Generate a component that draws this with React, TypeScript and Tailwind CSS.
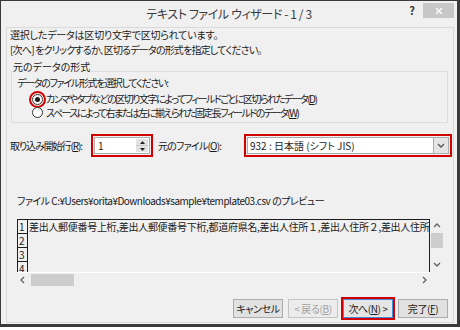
import React from 'react';

function U({ children }: { children: React.ReactNode }) {
  return <span className="underline underline-offset-1">{children}</span>;
}

function Chevron({ dir, color = '#606060' }: { dir: 'up' | 'down' | 'left' | 'right'; color?: string }) {
  const pts = {
    up: '1,5 4,2 7,5',
    down: '1,2 4,5 7,2',
    left: '5,1 2,4 5,7',
    right: '3,1 6,4 3,7',
  }[dir];
  return (
    <svg width="8" height="8" viewBox="0 0 8 8">
      <polyline points={pts} fill="none" stroke={color} strokeWidth="1.3" />
    </svg>
  );
}

function Radio({ checked }: { checked?: boolean }) {
  return (
    <div
      className={
        'w-[11px] h-[11px] rounded-full border border-[#333] bg-white flex items-center justify-center shrink-0 ' +
        (checked ? 'outline-2 outline-[#d40000] outline-offset-1' : '')
      }
    >
      {checked && <div className="w-[5px] h-[5px] rounded-full bg-[#1c1c1c]" />}
    </div>
  );
}

export default function App() {
  return (
    <div className="w-[460px] h-[330px] bg-white font-['Noto_Sans_CJK_JP','Noto_Sans',sans-serif] [font-feature-settings:'palt'] text-[10px] text-[#1a1a1a]">
      <div className="w-[460px] h-[327px] bg-[#f0f0f0] border-l border-t border-r-[3px] border-b-[3px] border-[#3a3a3a] flex flex-col">
        {/* title bar */}
        <div className="h-[26px] grid grid-cols-[1fr_auto_1fr] items-start">
          <div />
          <div className="pt-[5px] text-[12px] leading-[16px] tracking-[-0.4px] text-[#3a3a3a] whitespace-nowrap">
            テキスト ファイル ウィザード - 1 / 3
          </div>
          <div className="flex justify-end items-start pr-[3px] pt-[2px] gap-[8px]">
            <span className="text-[11px] font-bold leading-[14px] text-[#333]">?</span>
            <div className="w-[31px] h-[15px] bg-[#c7c7c7] flex items-center justify-center">
              <svg width="8" height="8" viewBox="0 0 8 8">
                <path d="M1 1 L7 7 M7 1 L1 7" stroke="#fff" strokeWidth="1.4" />
              </svg>
            </div>
          </div>
        </div>

        {/* client area */}
        <div className="ml-[5px] w-[448px] h-[296px] border border-[#dadada] flex flex-col">
          <div className="h-[13px] leading-[13px] pl-[3px] tracking-[-0.2px]">選択したデータは区切り文字で区切られています。</div>
          <div className="h-[17px] leading-[17px] pl-[3px] tracking-[-0.8px]">
            [次へ] をクリックするか、区切るデータの形式を指定してください。
          </div>

          {/* group box */}
          <div className="relative mt-[13px] ml-[4px] mr-[5px] border border-[#dcdcdc] pt-[4px] pb-[4px]">
            <span className="absolute left-[1px] -top-[12px] leading-[14px] bg-[#f0f0f0] pr-[1px]">元のデータの形式</span>
            <div className="h-[14px] leading-[14px] pl-[5px] tracking-[-1.3px]">データのファイル形式を選択してください:</div>
            <div className="mt-[1px] h-[16px] flex items-center pl-[20px] gap-[3px]">
              <Radio checked />
              <span className="leading-[16px] tracking-[-1.5px] whitespace-nowrap">
                カンマやタブなどの区切り文字によってフィールドごとに区切られたデータ(<U>D</U>)
              </span>
            </div>
            <div className="h-[11px] flex items-center pl-[20px] gap-[3px]">
              <Radio />
              <span className="leading-[11px] tracking-[-1.5px] whitespace-nowrap">
                スペースによって右または左に揃えられた固定長フィールドのデータ(<U>W</U>)
              </span>
            </div>
          </div>

          {/* start row / file origin */}
          <div className="mt-[11px] h-[23px] flex items-center pl-[3px]">
            <span className="w-[84px] whitespace-nowrap tracking-[-1.1px]">取り込み開始行(<U>R</U>):</span>
            <div className="w-[56px] h-[17px] border border-[#acacac] bg-white flex outline-2 outline-[#d40000] outline-offset-1">
              <span className="flex-1 pl-[3px] leading-[15px]">1</span>
              <div className="w-[12px] mr-[1px] my-[1px] bg-[#e3e3e3] flex flex-col">
                <div className="flex-1 flex items-center justify-center border-b border-[#c8c8c8]">
                  <svg width="5" height="3" viewBox="0 0 5 3"><polygon points="0,3 2.5,0 5,3" fill="#222" /></svg>
                </div>
                <div className="flex-1 flex items-center justify-center">
                  <svg width="5" height="3" viewBox="0 0 5 3"><polygon points="0,0 2.5,3 5,0" fill="#222" /></svg>
                </div>
              </div>
            </div>
            <span className="ml-[8px] w-[89px] whitespace-nowrap tracking-[-0.8px]">元のファイル(<U>O</U>):</span>
            <div className="w-[202px] h-[17px] border border-[#acacac] bg-white flex outline-2 outline-[#d40000] outline-offset-1">
              <span className="flex-1 pl-[2px] leading-[15px]">932 : 日本語 (シフト JIS)</span>
              <div className="w-[15px] bg-[#e5e5e5] border-l border-[#acacac] flex items-center justify-center">
                <Chevron dir="down" color="#555" />
              </div>
            </div>
          </div>

          <div className="mt-[37px] h-[14px] leading-[14px] pl-[10px] whitespace-nowrap tracking-[-0.5px]">
            ファイル C:¥Users¥orita¥Downloads¥sample¥template03.csv のプレビュー
          </div>

          {/* preview */}
          <div className="mt-[11px] ml-[10px] flex flex-col w-[427px]">
            <div className="flex">
              <div className="w-[413px] h-[53px] border-t border-l border-r border-[#1e1e1e] overflow-hidden">
                {[1, 2, 3, 4].map((n) => (
                  <div key={n} className="h-[14px] flex">
                    <div className="w-[10px] shrink-0 border-r border-b border-[#1e1e1e] leading-[11px] pt-[1px] pl-[1px] text-[10px]">
                      {n}
                    </div>
                    {n === 1 && (
                      <div className="pl-[1px] whitespace-nowrap leading-[13px] tracking-[-0.3px] [font-feature-settings:normal]">
                        差出人郵便番号上桁,差出人郵便番号下桁,都道府県名,差出人住所１,差出人住所２,差出人住所
                      </div>
                    )}
                  </div>
                ))}
              </div>
              <div className="w-[14px] h-[53px] flex flex-col items-center">
                <div className="h-[14px] flex items-center justify-center">
                  <Chevron dir="up" />
                </div>
                <div className="w-[12px] h-[15px] bg-[#cdcdcd]" />
                <div className="flex-1" />
                <div className="h-[14px] flex items-center justify-center">
                  <Chevron dir="down" />
                </div>
              </div>
            </div>
            <div className="w-[413px] h-[1px] bg-white" />
            <div className="w-[413px] h-[13px] flex items-center">
              <div className="w-[12px] flex justify-center">
                <Chevron dir="left" />
              </div>
              <div className="ml-[2px] w-[43px] h-[12px] bg-[#cdcdcd]" />
              <div className="flex-1" />
              <div className="w-[12px] flex justify-center">
                <Chevron dir="right" />
              </div>
            </div>
          </div>

          {/* buttons */}
          <div className="mt-[13px] h-[19px] flex justify-end pr-[5px] gap-[5px]">
            <div className="w-[50px] border border-[#adadad] bg-[#e1e1e1] flex items-center justify-center leading-[17px] tracking-[-0.4px]">
              キャンセル
            </div>
            <div className="w-[50px] border border-[#c4c4c4] bg-[#ececec] text-[#a2a2a2] flex items-center justify-center leading-[17px] tracking-[-0.4px]">
              &lt; 戻る(<U>B</U>)
            </div>
            <div className="w-[50px] border border-[#3c8fd8] bg-[#e5e5e5] flex items-center justify-center leading-[17px] tracking-[-0.4px] outline-2 outline-[#d40000] outline-offset-0">
              次へ(<U>N</U>) &gt;
            </div>
            <div className="w-[50px] border border-[#adadad] bg-[#e1e1e1] flex items-center justify-center leading-[17px] tracking-[-0.4px]">
              完了(<U>F</U>)
            </div>
          </div>
        </div>
      </div>
    </div>
  );
}
